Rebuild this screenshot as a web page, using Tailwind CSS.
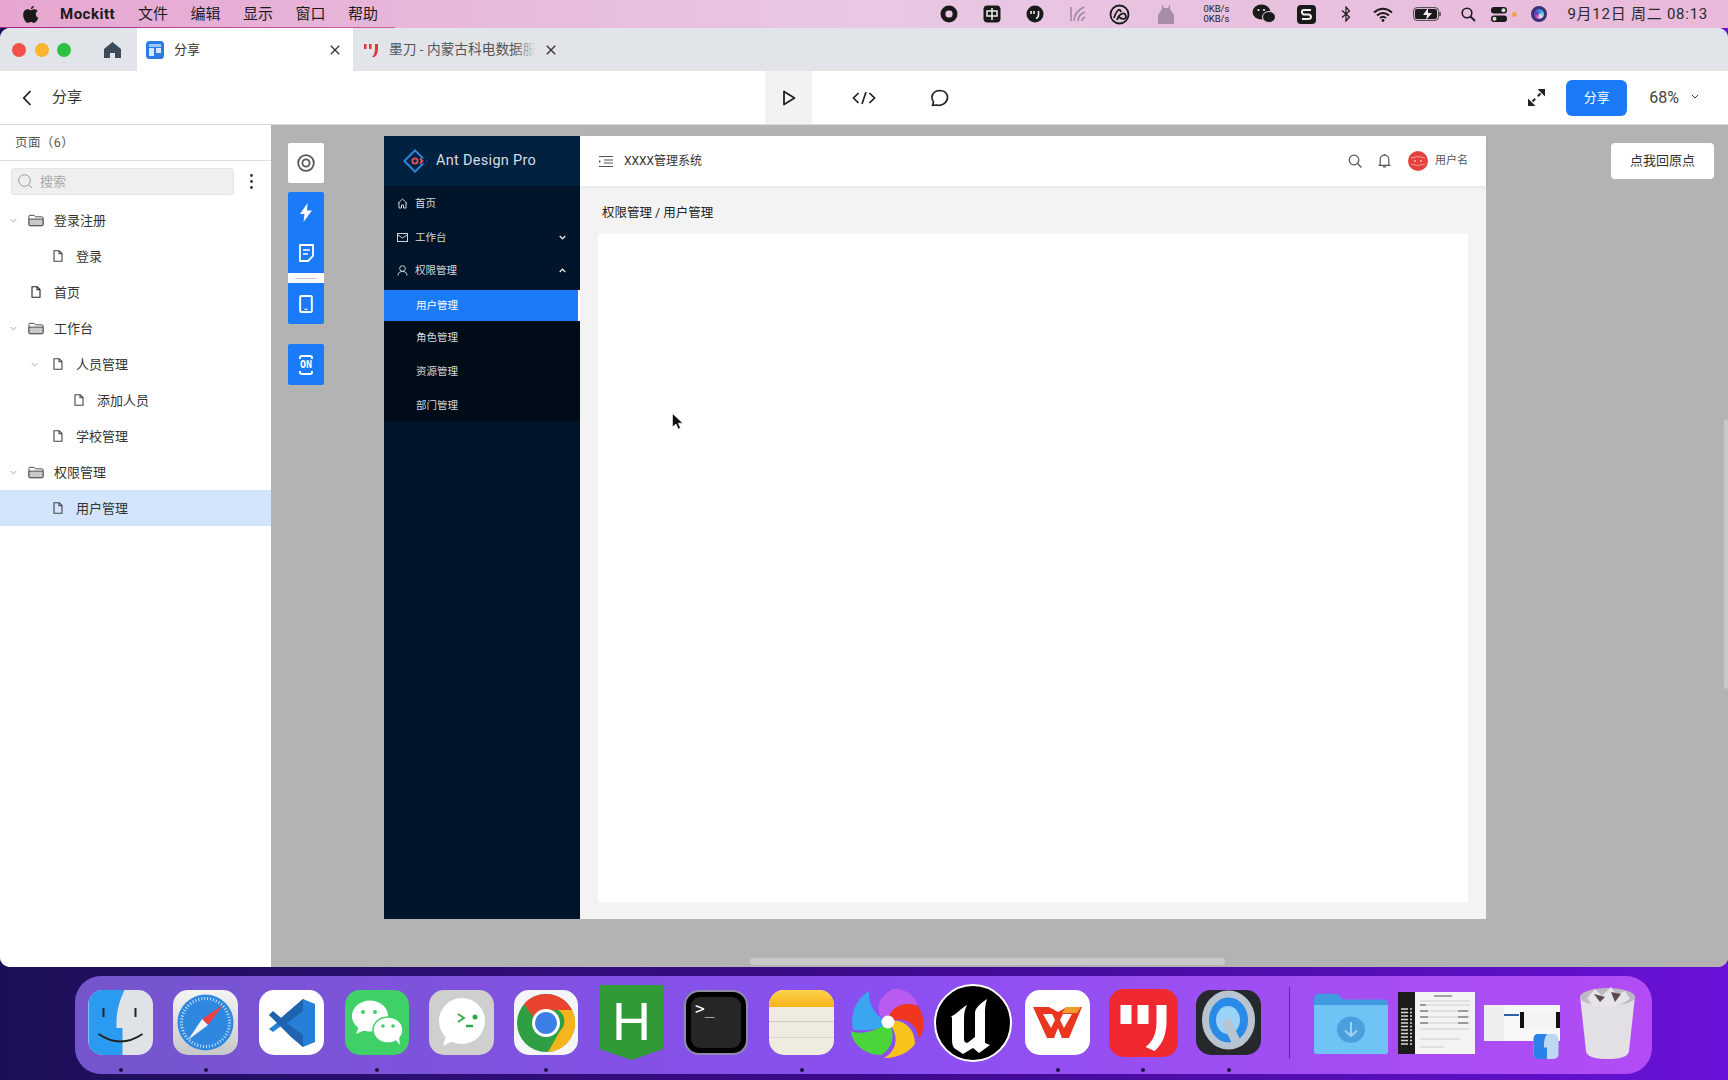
<!DOCTYPE html>
<html lang="zh-CN">
<head>
<meta charset="UTF-8" />
<title>分享</title>
<script src="https://cdn.jsdelivr.net/npm/@tailwindcss/browser@4"></script>
</head>
<body class="w-[1728px] h-[1080px] overflow-hidden relative bg-gradient-to-r from-[#1c0f58] via-[#3c0a8c] to-[#6a12d8] font-['Roboto','Noto_Sans_CJK_SC',sans-serif] text-[#333]">

<svg class="hidden">
  <symbol id="file" viewBox="0 0 10 12"><path d="M1 .7h5.200L9 3.500v7.800H1zM6 .9v2.800h2.900" fill="none" stroke="currentColor" stroke-width="1.100"/></symbol>
  <symbol id="folder" viewBox="0 0 17 13"><path d="M1 11V2q0-1 1-1h4.500l1.500 1.600h6.800q1.200 0 1.200 1.200V11q0 1-1 1H2q-1 0-1-1z" fill="#fff" stroke="#444" stroke-width="1"/><path d="M1 5h15v6q0 1-1 1H2q-1 0-1-1z" fill="#c9c9c9" stroke="#444" stroke-width="1"/></symbol>
  <symbol id="chev" viewBox="0 0 8 5"><path d="M.8.8 4 4 7.200.8" fill="none" stroke="#999" stroke-width="1"/></symbol>
</svg>

<!-- mac menu bar -->
<div class="h-[28px] flex items-center justify-between bg-gradient-to-r from-[#e6a6d0] via-[#e8c8e4] to-[#e9b9da] text-[15px] text-[#1c1c1c] relative">
  <div class="flex items-center">
    <svg class="ml-[22px] w-[17px] h-[19px]" viewBox="0 0 17 20"><path d="M12 1c.1 1.600-1.300 3.400-3.200 3.300C8.600 2.700 10.200 1.100 12 1zM8.700 5.400c.9 0 2-1 3.700-1 1.200 0 2.700.6 3.600 1.900-2.900 1.800-2.400 5.800.7 7.100-.9 2.400-2.700 5.400-4.500 5.400-1.200 0-1.700-.8-3.200-.8s-2 .8-3.200.8C3.500 18.800.8 14.200.8 10.400c0-3.600 2.300-5.800 4.600-5.800 1.400 0 2.500.8 3.300.8z" fill="#1a1a1a"/></svg>
    <span class="ml-[21px] font-bold text-[#1a1a1a] w-[78px] tracking-[.5px]">Mockitt</span>
    <div class="flex gap-[22.500px]"><span>文件</span><span>编辑</span><span>显示</span><span>窗口</span><span>帮助</span></div>
  </div>
  <div class="flex items-center pr-[20px]">
    <svg class="w-[18px] h-[18px]" viewBox="0 0 18 18"><circle cx="9" cy="9" r="8.500" fill="#1a1a1a"/><rect x="5.500" y="5.500" width="7" height="7" rx="3" fill="#e8c8e4"/></svg>
    <svg class="ml-[25px] w-[18px] h-[18px]" viewBox="0 0 18 18"><rect x=".5" y=".5" width="17" height="17" rx="4" fill="#1a1a1a"/><path d="M4 6h10v5H4zM9 3v12" fill="none" stroke="#eee" stroke-width="1.500"/></svg>
    <svg class="ml-[25px] w-[18px] h-[18px]" viewBox="0 0 18 18"><circle cx="9" cy="9" r="8.500" fill="#1a1a1a"/><path d="M5 6v3M8 6v3M12.500 6v4q0 2.500-2.500 3.500" fill="none" stroke="#eee" stroke-width="1.600"/></svg>
    <svg class="ml-[25px] w-[18px] h-[18px]" viewBox="0 0 18 18"><path d="M2 2v14M5 16C5 9 9 5 15 2M9 16c0-4 2-7 7-9M13 16c0-2 1-3 3-4" fill="none" stroke="#9a8a9a" stroke-width="1.500"/></svg>
    <svg class="ml-[22px] w-[21px] h-[21px]" viewBox="0 0 21 21"><circle cx="10.500" cy="10.500" r="9" fill="none" stroke="#1a1a1a" stroke-width="1.800"/><path d="M5 14c3-9 6-10 7-6M8 16c2-7 9-9 9-3 0 2-4 3-7 0" fill="none" stroke="#1a1a1a" stroke-width="1.800"/></svg>
    <svg class="ml-[27px] w-[18px] h-[22px]" viewBox="0 0 18 22"><path d="M5 1v5L1 12v9h16v-9l-4-6V1l-2 4H7z" fill="#a68da6"/></svg>
    <div class="ml-[25px] w-[32px] text-[9.500px] leading-[10px] text-center text-[#222]">0KB/s<br>0KB/s</div>
    <svg class="ml-[20px] w-[24px] h-[20px]" viewBox="0 0 24 20"><ellipse cx="9.500" cy="8" rx="9" ry="7.500" fill="#1a1a1a"/><ellipse cx="17" cy="13" rx="6.500" ry="5.500" fill="#1a1a1a" stroke="#e8c8e4"/><circle cx="6.500" cy="6" r="1.100" fill="#eee"/><circle cx="12" cy="6" r="1.100" fill="#eee"/></svg>
    <svg class="ml-[21px] w-[19px] h-[19px]" viewBox="0 0 19 19"><rect width="19" height="19" rx="4" fill="#1a1a1a"/><path d="M14 5H7Q4.500 5 5 7.500T8 9.500h3.500Q14 10 14 12t-3 2H5" fill="none" stroke="#eee" stroke-width="2"/></svg>
    <svg class="ml-[25px] w-[10px] h-[16px]" viewBox="0 0 10 16"><path d="M1 4.500 8.500 11 5 15V1l3.500 4L1 11.500" fill="none" stroke="#1a1a1a" stroke-width="1.200"/></svg>
    <svg class="ml-[22px] w-[20px] h-[15px]" viewBox="0 0 20 15"><path d="M1 5.500q9-7.500 18 0M4 8.500q6-5 12 0M7 11q3-2.500 6 0" fill="none" stroke="#1a1a1a" stroke-width="2"/><circle cx="10" cy="13.500" r="1.400" fill="#1a1a1a"/></svg>
    <svg class="ml-[20px] w-[29px] h-[14px]" viewBox="0 0 29 14"><rect x=".6" y=".6" width="25" height="12.800" rx="3.500" fill="none" stroke="#444"/><rect x="2" y="2" width="22" height="10" rx="2" fill="#1a1a1a"/><path d="M27 5v4" stroke="#444" stroke-width="1.500"/><path d="M15 1 10 8h4l-1 5 6-7h-4z" fill="#eee"/></svg>
    <svg class="ml-[19px] w-[15px] h-[15px]" viewBox="0 0 15 15"><circle cx="6" cy="6" r="4.800" fill="none" stroke="#1a1a1a" stroke-width="1.600"/><path d="m9.500 9.500 4.500 4.500" stroke="#1a1a1a" stroke-width="1.800"/></svg>
    <svg class="ml-[15px] w-[16px] h-[15px]" viewBox="0 0 16 15"><rect y="0" width="16" height="6.500" rx="3" fill="#1a1a1a"/><rect y="8.500" width="16" height="6.500" rx="3" fill="#1a1a1a"/><circle cx="12.500" cy="3.200" r="2" fill="#ddd"/><circle cx="3.500" cy="11.700" r="2" fill="#ddd"/></svg>
    <span class="ml-[5px] w-[5px] h-[5px] rounded-full bg-[#f0a050]"></span>
    <span class="ml-[14px] w-[16px] h-[16px] rounded-full bg-[conic-gradient(#3f7fe0,#46c6d8,#e9e9f0,#c84fb8,#5b3fb8,#3f7fe0)] border-[3px] border-[#3a2f78]"></span>
    <span class="ml-[20px] text-[15px] tracking-[.75px] text-[#2a2a2a]">9月12日 周二 08:13</span>
  </div>
  <div class="absolute left-0 bottom-0 w-[395px] h-px bg-gradient-to-r from-[#a0208c] to-[#d060a8]"></div>
</div>

<!-- window -->
<div class="h-[939px] flex flex-col rounded-[10px] overflow-hidden bg-white relative">
  <!-- tabs -->
  <div class="h-[43px] flex items-stretch bg-[#e1e4e9] shrink-0">
    <div class="flex items-center w-[137px] shrink-0">
      <span class="ml-[12px] w-[14px] h-[14px] rounded-full bg-[#f4504a]"></span>
      <span class="ml-[9px] w-[14px] h-[14px] rounded-full bg-[#f8b52f]"></span>
      <span class="ml-[8px] w-[14px] h-[14px] rounded-full bg-[#2cc140]"></span>
      <svg class="ml-[33px] w-[17px] h-[16px]" viewBox="0 0 17 16"><path d="M8.500 0 17 7v9h-6v-5H6v5H0V7z" fill="#3d4a57"/></svg>
    </div>
    <div class="w-[216px] bg-white flex items-center text-[13px] text-[#333]">
      <svg class="ml-[9px] w-[18px] h-[18px]" viewBox="0 0 18 18"><rect width="18" height="18" rx="3.500" fill="#2c7ce5"/><path d="M3 3h12v3H3z" fill="#9cc4f5"/><path d="M3 7h5v8H3zM10 7h5v5h-5z" fill="#d8e8fb"/></svg>
      <span class="ml-[10px]">分享</span>
      <svg class="ml-auto mr-[13px] w-[10px] h-[10px]" viewBox="0 0 10 10"><path d="m.8.8 8.400 8.400M9.200.8.800 9.200" stroke="#333" stroke-width="1.300"/></svg>
    </div>
    <div class="flex items-center text-[13.700px] text-[#555]">
      <svg class="ml-[10px] w-[16px] h-[14px]" viewBox="0 0 16 14"><path d="M1 1h2.500v5H1zM6 1h2.500v5H6zM12 1h3v5q0 5-3.500 8H9q3-3 3-8z" fill="#e6323a"/></svg>
      <div class="ml-[10px] relative whitespace-nowrap">墨刀 - 内蒙古科电数据服<div class="absolute right-0 top-0 w-[22px] h-full bg-gradient-to-r from-transparent to-[#e1e4e9]"></div></div>
      <svg class="ml-[10px] w-[10px] h-[10px]" viewBox="0 0 10 10"><path d="m.8.8 8.400 8.400M9.200.8.800 9.200" stroke="#333" stroke-width="1.300"/></svg>
    </div>
  </div>
  <!-- toolbar -->
  <div class="h-[54px] shrink-0 flex items-center bg-white border-b border-[#d9d9d9]">
    <svg class="ml-[22px] w-[10px] h-[16px]" viewBox="0 0 10 16"><path d="M8.500 1 1.800 8l6.700 7" fill="none" stroke="#222" stroke-width="1.800"/></svg>
    <span class="ml-[20px] w-[31px] text-[15px] text-[#333]">分享</span>
    <div class="ml-[682px] w-[47px] self-stretch bg-[#f2f2f2] flex items-center justify-center">
      <svg class="w-[14px] h-[16px]" viewBox="0 0 14 16"><path d="M2 1.500v13L12.500 8z" fill="none" stroke="#222" stroke-width="1.800" stroke-linejoin="round"/></svg>
    </div>
    <svg class="ml-[40px] w-[24px] h-[14px]" viewBox="0 0 24 14"><path d="M6.500 2 1.500 7l5 5M17.500 2l5 5-5 5M14 1l-4 12" fill="none" stroke="#222" stroke-width="1.700"/></svg>
    <svg class="ml-[54px] w-[19px] h-[18px]" viewBox="0 0 19 18"><path d="M2.500 16.500 3.500 13Q1.500 10.500 2 7.500 3 2 9.500 1.500 16 1.500 17.500 7q.5 5-4 8-3.500 2-7 1z" fill="none" stroke="#222" stroke-width="1.700" stroke-linejoin="round"/></svg>
    <svg class="ml-auto w-[17px] h-[17px]" viewBox="0 0 17 17"><path d="M17 0v7.500L9.500 0zM0 17V9.500L7.500 17z" fill="#222"/><path d="M12.500 4.500 9.800 7.200M4.500 12.500l2.700-2.700" stroke="#222" stroke-width="2"/></svg>
    <button class="ml-[21px] w-[61px] h-[36px] rounded-[6px] bg-[#1a7af8] text-white text-[13px]">分享</button>
    <span class="ml-[22px] text-[16px] text-[#444]">68%</span>
    <svg class="ml-[12px] mb-[3px] mr-[29px] w-[8px] h-[5px]" viewBox="0 0 8 5"><path d="M.8.8 4 4 7.200.8" fill="none" stroke="#333" stroke-width="1"/></svg>
  </div>
  <div class="flex-1 flex min-h-0">
    <!-- page tree -->
    <aside class="w-[271px] shrink-0 bg-white">
      <div class="h-[36px] border-b border-[#e0e0e0] pl-[15px] pt-[2px] flex items-center text-[12.500px] text-[#555] tracking-[.4px]">页面（6）</div>
      <div class="h-[41px] flex items-center">
        <div class="ml-[11px] w-[223px] h-[27px] bg-[#efefef] border border-[#e4e4e4] rounded-[3px] flex items-center text-[13px] text-[#aaa]">
          <svg class="ml-[6px] w-[15px] h-[15px]" viewBox="0 0 15 15"><circle cx="6.500" cy="6.500" r="5.800" fill="none" stroke="#999"/><path d="m10.800 10.800 3.500 3.500" stroke="#999"/></svg>
          <span class="ml-[7px]">搜索</span>
        </div>
        <svg class="ml-[16px] w-[3px] h-[15px]" viewBox="0 0 3 15"><circle cx="1.500" cy="1.500" r="1.400" fill="#333"/><circle cx="1.500" cy="7.500" r="1.400" fill="#333"/><circle cx="1.500" cy="13.500" r="1.400" fill="#333"/></svg>
      </div>
      <div class="text-[13px] text-[#333]">
        <div class="h-[36px] flex items-center pl-[10px]"><svg class="w-[7px] h-[5px] text-[#999]"><use href="#chev"/></svg><svg class="ml-[11px] w-[16px] h-[13px]"><use href="#folder"/></svg><span class="ml-[10px] mt-[2px]">登录注册</span></div>
        <div class="h-[36px] flex items-center pl-[53px]"><svg class="w-[10px] h-[12px] text-[#444]"><use href="#file"/></svg><span class="ml-[13px] mt-[2px]">登录</span></div>
        <div class="h-[36px] flex items-center pl-[31px]"><svg class="w-[10px] h-[12px] text-[#222]"><use href="#file"/></svg><span class="ml-[13px] mt-[2px]">首页</span></div>
        <div class="h-[36px] flex items-center pl-[10px]"><svg class="w-[7px] h-[5px]"><use href="#chev"/></svg><svg class="ml-[11px] w-[16px] h-[13px]"><use href="#folder"/></svg><span class="ml-[10px] mt-[2px]">工作台</span></div>
        <div class="h-[36px] flex items-center pl-[31px]"><svg class="w-[7px] h-[5px]"><use href="#chev"/></svg><svg class="ml-[15px] w-[10px] h-[12px] text-[#444]"><use href="#file"/></svg><span class="ml-[13px] mt-[2px]">人员管理</span></div>
        <div class="h-[36px] flex items-center pl-[74px]"><svg class="w-[10px] h-[12px] text-[#444]"><use href="#file"/></svg><span class="ml-[13px] mt-[2px]">添加人员</span></div>
        <div class="h-[36px] flex items-center pl-[53px]"><svg class="w-[10px] h-[12px] text-[#444]"><use href="#file"/></svg><span class="ml-[13px] mt-[2px]">学校管理</span></div>
        <div class="h-[36px] flex items-center pl-[10px]"><svg class="w-[7px] h-[5px]"><use href="#chev"/></svg><svg class="ml-[11px] w-[16px] h-[13px]"><use href="#folder"/></svg><span class="ml-[10px] mt-[2px]">权限管理</span></div>
        <div class="h-[36px] flex items-center pl-[53px] bg-[#d3e5fd]"><svg class="w-[10px] h-[12px] text-[#444]"><use href="#file"/></svg><span class="ml-[13px] mt-[2px]">用户管理</span></div>
      </div>
    </aside>
    <!-- canvas -->
    <main class="flex-1 bg-[#b3b3b3] relative overflow-hidden">
      <div class="absolute left-[17px] top-[18px] w-[36px] flex flex-col">
        <div class="h-[40px] bg-white rounded-[2px] flex items-center justify-center">
          <svg class="w-[18px] h-[18px]" viewBox="0 0 18 18"><circle cx="9" cy="9" r="7.800" fill="none" stroke="#555" stroke-width="1.800"/><circle cx="9" cy="9" r="3.600" fill="none" stroke="#555" stroke-width="1.800"/></svg>
        </div>
        <div class="mt-[9px] h-[132px] bg-[#1a7af8] rounded-[2px] flex flex-col items-center">
          <svg class="mt-[11px] w-[12px] h-[19px]" viewBox="0 0 12 19"><path d="M7.500 0 0 11h4.500L3.500 19 12 7.500H7z" fill="#fff"/></svg>
          <svg class="mt-[22px] w-[15px] h-[18px]" viewBox="0 0 15 18"><path d="M1 1h13v11l-5 5H1z" fill="none" stroke="#fff" stroke-width="1.800"/><path d="M4 6h7M4 10h5" stroke="#fff" stroke-width="1.500"/></svg>
          <div class="mt-[11px] w-full h-[10px] bg-white flex items-center justify-center"><div class="w-[22px] h-px bg-[#ccc]"></div></div>
          <svg class="mt-[12px] w-[14px] h-[18px]" viewBox="0 0 13 17"><rect x="1" y="1" width="11" height="15" rx="1" fill="none" stroke="#fff" stroke-width="1.800"/><path d="M5 13.500h3" stroke="#fff"/></svg>
        </div>
        <div class="mt-[20px] h-[41px] bg-[#1a7af8] rounded-[2px] flex flex-col items-center justify-center text-white">
          <div class="w-[14px] h-[4px] border-t-2 border-x-2 border-white rounded-t-[3px]"></div>
          <span class="font-['DejaVu_Sans_Mono',monospace] font-bold text-[10px] leading-[12px]">ON</span>
          <div class="w-[14px] h-[4px] border-b-2 border-x-2 border-white rounded-b-[3px]"></div>
        </div>
      </div>

      <!-- artboard -->
      <div class="absolute left-[113px] top-[11px] w-[1102px] h-[783px] flex bg-[#f3f3f3]">
        <div class="w-[196px] shrink-0 bg-[#001529] text-[10.500px] text-[#d6dadd]">
          <div class="h-[50px] bg-[#002140] flex items-center pl-[19px]">
            <svg class="w-[24px] h-[24px]" viewBox="0 0 24 24"><rect x="4.500" y="4.500" width="15" height="15" transform="rotate(45 12 12)" fill="none" stroke="#2f86d6" stroke-width="2"/><path d="M19 12h4" stroke="#001f3c" stroke-width="5"/><circle cx="12" cy="12" r="2.600" fill="none" stroke="#e8505b" stroke-width="1.800"/><path d="m17 9.500 2.500 2.500-2.500 2.500" fill="none" stroke="#e8505b" stroke-width="1.800"/></svg>
            <span class="ml-[9px] text-[14.500px] font-normal text-[#d5dbe1] tracking-[.3px]">Ant Design Pro</span>
          </div>
          <div class="h-[35px] flex items-center pl-[13px]">
            <svg class="w-[11px] h-[11px]" viewBox="0 0 11 11"><path d="M.8 5.500 5.500 1l4.700 4.500M2 4.500V10h2.500V7h2v3H9V4.500" fill="none" stroke="#cfd4d8"/></svg>
            <span class="ml-[7px]">首页</span>
          </div>
          <div class="h-[33px] flex items-center pl-[13px]">
            <svg class="w-[11px] h-[9px]" viewBox="0 0 11 9"><rect x=".5" y=".5" width="10" height="8" fill="none" stroke="#cfd4d8"/><path d="m1 2 4.500 3L10 2" fill="none" stroke="#cfd4d8"/></svg>
            <span class="ml-[7px]">工作台</span>
            <svg class="ml-auto mr-[14px] w-[7px] h-[5px]" viewBox="0 0 8 5"><path d="M.8.8 4 4 7.200.8" fill="none" stroke="#e5e5e5" stroke-width="1.500"/></svg>
          </div>
          <div class="h-[33px] mb-[3px] flex items-center pl-[13px]">
            <svg class="w-[11px] h-[11px]" viewBox="0 0 11 11"><circle cx="5.500" cy="3.500" r="2.800" fill="none" stroke="#cfd4d8"/><path d="M1 10.500q0-4 4.500-4t4.500 4" fill="none" stroke="#cfd4d8"/></svg>
            <span class="ml-[7px]">权限管理</span>
            <svg class="ml-auto mr-[14px] w-[7px] h-[5px]" viewBox="0 0 8 5"><path d="M.8 4.200 4 1l3.200 3.200" fill="none" stroke="#e5e5e5" stroke-width="1.500"/></svg>
          </div>
          <div class="bg-[#000c17]">
            <div class="h-[31px] bg-[#1a7af8] border-r-[2px] border-white flex items-center pl-[32px] text-white">用户管理</div>
            <div class="h-[34px] flex items-center pl-[32px]">角色管理</div>
            <div class="h-[34px] flex items-center pl-[32px]">资源管理</div>
            <div class="h-[33px] flex items-center pl-[32px]">部门管理</div>
          </div>
        </div>
        <div class="flex-1 flex flex-col min-w-0">
          <div class="h-[50px] shrink-0 bg-white shadow-[0_1px_3px_rgba(0,0,0,.08)] flex items-center text-[#333]">
            <svg class="ml-[19px] w-[14px] h-[11px]" viewBox="0 0 14 11"><path d="M0 .5h14M5 4h9M5 7h9M0 10.500h14" stroke="#555"/><path d="M0 4v3l2-1.500z" fill="#555"/></svg>
            <span class="ml-[11px] text-[12px]">XXXX管理系统</span>
            <svg class="ml-auto w-[14px] h-[14px]" viewBox="0 0 14 14"><circle cx="6" cy="6" r="4.800" fill="none" stroke="#555" stroke-width="1.200"/><path d="m9.500 9.500 4 4" stroke="#555" stroke-width="1.300"/></svg>
            <svg class="ml-[16px] w-[13px] h-[16px]" viewBox="0 0 12 14"><path d="M2 10.500V5.500a4 4 0 0 1 8 0v5M.5 11h11M6 .5v1M4.500 12.500h3" fill="none" stroke="#555" stroke-width="1.100"/></svg>
            <svg class="ml-[17px] w-[20px] h-[20px]" viewBox="0 0 20 20"><circle cx="10" cy="10" r="10" fill="#e4423c"/><path d="M3 7q7-3 14 0M3 13q7 3 14 0" fill="none" stroke="#f5b5a5" stroke-width=".8"/><path d="M7 9v2M13 9v2" stroke="#fff"/></svg>
            <span class="ml-[7px] mr-[18px] text-[11px] text-[#555]">用户名</span>
          </div>
          <div class="h-[48px] shrink-0 flex items-center pl-[22px] pt-[6px] text-[12.500px] text-[#222]">权限管理 / 用户管理</div>
          <div class="mx-[18px] h-[668px] bg-white"></div>
        </div>
      </div>

      <button class="absolute left-[1340px] top-[18px] w-[103px] h-[36px] rounded-[4px] bg-white text-[13px] text-[#333]">点我回原点</button>
      <!-- pointer -->
      <svg class="absolute left-[401px] top-[288px] w-[11px] h-[17px]" viewBox="0 0 11 17"><path d="M.5.5V14l3.500-3 2.200 5 2.300-1-2.200-4.800h4.500z" fill="#111" stroke="#fff" stroke-width=".6"/></svg>
      <!-- scrollbars -->
      <div class="absolute left-[1453px] top-[294px] w-[4px] h-[270px] rounded-full bg-[#c8c8c8]"></div>
      <div class="absolute left-[479px] top-[833px] w-[475px] h-[7px] rounded-full bg-[#c9c9c9]"></div>
    </main>
  </div>
</div>

<!-- dock -->
<div class="absolute left-[75px] top-[976px] w-[1577px] h-[98px] rounded-[26px] bg-gradient-to-r from-[#7455cc] via-[#8a4ff0] to-[#b34cf5] flex items-center pl-[13px] pb-[5px]">
  <!-- finder -->
  <div class="w-[65px] h-[65px] rounded-[15px] overflow-hidden bg-[#dfe3e8] shrink-0">
    <svg class="w-full h-full" viewBox="0 0 64 65"><path d="M0 0h36q-9 18-8 38h6v27H0z" fill="#2a9bf0"/><path d="M15 18v9M47 18v9" stroke="#222" stroke-width="2"/><path d="M10 44q22 15 44 0" fill="none" stroke="#222" stroke-width="2"/></svg>
  </div>
  <!-- safari -->
  <div class="ml-[20px] w-[65px] h-[65px] rounded-[15px] bg-gradient-to-b from-[#f4f4f4] to-[#c8c8c8] flex items-center justify-center shrink-0">
    <svg class="w-[57px] h-[57px]" viewBox="0 0 57 57"><circle cx="28.500" cy="28.500" r="28" fill="#2f88e0"/><circle cx="28.500" cy="28.500" r="24" fill="none" stroke="#cfe3f8" stroke-width="3" stroke-dasharray="1 2"/><path d="m46 11-21 14 6 6z" fill="#ee4040"/><path d="m11 46 14-21 6 6z" fill="#f2f2f2"/></svg>
  </div>
  <!-- vscode -->
  <div class="ml-[21px] w-[65px] h-[65px] rounded-[15px] bg-white flex items-center justify-center shrink-0">
    <svg class="w-[48px] h-[50px]" viewBox="0 0 48 50"><path d="M35 1 47 6v38L35 49 13 28l-8 6-4-3 9-7-9-7 4-3 8 6z" fill="#2680d8"/><path d="M35 1 13 20 5 13 1 17l22 22 12 10V37L19 25 35 13z" fill="#1f62b0"/></svg>
  </div>
  <!-- wechat -->
  <div class="ml-[21px] w-[64px] h-[65px] rounded-[15px] bg-[#3fd068] shrink-0">
    <svg class="w-full h-full" viewBox="0 0 64 65"><ellipse cx="25" cy="26" rx="18" ry="15.500" fill="#fff"/><path d="m14 36-3 8 9-4z" fill="#fff"/><ellipse cx="43" cy="40" rx="15" ry="13" fill="#fff" stroke="#3fd068" stroke-width="1.500"/><path d="m50 49 5 6-1-9z" fill="#fff"/><circle cx="18" cy="22" r="2" fill="#3fd068"/><circle cx="30" cy="22" r="2" fill="#3fd068"/><circle cx="38" cy="36" r="1.800" fill="#3fd068"/><circle cx="48" cy="36" r="1.800" fill="#3fd068"/></svg>
  </div>
  <!-- grey chat -->
  <div class="ml-[20px] w-[65px] h-[65px] rounded-[15px] bg-[#cfcfcf] shrink-0 flex">
    <svg class="w-full h-full" viewBox="0 0 65 65"><circle cx="33" cy="31" r="23" fill="#fff"/><path d="m17 46-3 10 12-6z" fill="#fff"/><path d="m29 24 6 4-6 4" fill="none" stroke="#2ba84a" stroke-width="1.800"/><circle cx="46" cy="27" r="2.500" fill="#2ba84a"/><path d="M37 36h7" stroke="#2ba84a" stroke-width="2.500"/></svg>
  </div>
  <!-- chrome -->
  <div class="ml-[20px] w-[64px] h-[65px] rounded-[15px] bg-[#f4f5f8] flex items-center justify-center shrink-0">
    <svg class="w-[60px] h-[60px]" viewBox="0 0 60 60"><circle cx="30" cy="30" r="29" fill="#2f9e44"/><path d="M30 1a29 29 0 0 1 26 16H30a13 13 0 0 0-12 8L8 11A29 29 0 0 1 30 1z" fill="#e8442f"/><path d="M56 17a29 29 0 0 1-24 42l12-21a13 13 0 0 0-2-21z" fill="#f7b51c"/><circle cx="30" cy="30" r="14" fill="#fff"/><circle cx="30" cy="30" r="11" fill="#3c7fe6"/></svg>
  </div>
  <!-- hbuilder -->
  <div class="ml-[21px] w-[65px] h-[75px] bg-[#2f9a36] [clip-path:polygon(0_0,100%_0,100%_85%,50%_100%,0_85%)] flex items-start justify-center shrink-0 text-white">
    <span class="font-['Liberation_Sans',sans-serif] text-[54px] leading-[72px] font-normal">H</span>
  </div>
  <!-- terminal -->
  <div class="ml-[20px] w-[64px] h-[65px] rounded-[15px] bg-black border-2 border-[#8d8da8] p-[5px] shrink-0">
    <div class="w-full h-full rounded-[9px] bg-[#262626] text-white font-['DejaVu_Sans_Mono',monospace] text-[16px] leading-[18px] pl-[4px] pt-[3px]">&gt;_</div>
  </div>
  <!-- notes -->
  <div class="ml-[21px] w-[65px] h-[65px] rounded-[15px] overflow-hidden bg-[#eeebdf] shrink-0 flex flex-col">
    <div class="h-[17px] bg-gradient-to-b from-[#fdd24a] to-[#f6b40e]"></div>
    <div class="h-[15px] border-b border-[#cfcbbd]"></div>
    <div class="h-[16px] border-b border-[#d9d5c8]"></div>
  </div>
  <!-- colorful spiral -->
  <svg class="ml-[17px] w-[74px] h-[73px] shrink-0" viewBox="0 0 74 73"><path d="M37 36C23 30 24 12 42 3c12-1 22 6 25 17-12-2-24 3-30 16z" fill="#b95af0"/><path d="M37 36c0-13 14-22 30-16 7 11 7 24 1 33-2-16-15-24-31-17z" fill="#f0361f"/><path d="M37 36c12-5 27 4 27 22-6 9-21 15-31 14 12-6 17-22 4-36z" fill="#f9c41a"/><path d="M37 36c9 11 4 28-7 33C14 69 1 58 0 45c11 5 27-1 37-9z" fill="#48d63b"/><path d="M37 36C27 46 12 44 2 44-1 30 4 13 18 5c-1 13 6 25 19 31z" fill="#3aa6f2"/><circle cx="37" cy="36" r="6.500" fill="#fff"/></svg>
  <!-- unreal -->
  <div class="ml-[9px] w-[78px] h-[78px] rounded-full bg-black border-2 border-white shrink-0">
    <svg class="w-full h-full" viewBox="0 0 74 74"><path d="M14 31c7-3 10-8 17-12-3 6-3 10-3 18v16c0 4 3 5 6 2l5-4V27c0-5 5-9 12-14-2 6-2 10-2 16v28l5 2-11 8-6-5-10 6-9-6c-2-3-2-6-2-10V33c0-3-1-3-2-2z" fill="#fff"/></svg>
  </div>
  <!-- wps -->
  <div class="ml-[13px] w-[65px] h-[65px] rounded-[15px] bg-white flex items-center justify-center shrink-0">
    <svg class="w-[49px] h-[31px]" viewBox="0 0 49 31"><path d="M0 0h16l9 5 9-5h15L36 31h-7l-4-10-4 10h-7zM10 7l8 14 4-8-3-6zM39 7h-9l-3 6 4 8z" fill="#e8361f" fill-rule="evenodd"/><path d="M33 0h15l-4 6H29z" fill="#f59a2f"/></svg>
  </div>
  <!-- mockingbot -->
  <div class="ml-[19px] w-[69px] h-[68px] rounded-[15px] bg-[#f0282f] shrink-0">
    <svg class="w-full h-full" viewBox="0 0 68 68"><path d="M11 16h11v19H11zM28 16h11v19H28zM47 16h10v16q0 20-12 30l-9-4c8-6 11-14 11-26z" fill="#fff"/></svg>
  </div>
  <!-- quicktime -->
  <div class="ml-[18px] w-[65px] h-[65px] rounded-[15px] bg-[#26282c] shrink-0">
    <svg class="w-full h-full" viewBox="0 0 65 65"><ellipse cx="32.500" cy="30" rx="23" ry="26" fill="#2a8ae8" stroke="#b8c4d0" stroke-width="7"/><ellipse cx="32" cy="30" rx="12" ry="14" fill="#9bd2f7"/><path d="m30 30 12 26" stroke="#b8c4d0" stroke-width="9"/></svg>
  </div>
  <div class="ml-[28px] w-px h-[72px] bg-[#5b2a90] shrink-0"></div>
  <!-- downloads -->
  <div class="ml-[23px] w-[76px] shrink-0">
    <svg class="w-[76px] h-[64px] block" viewBox="0 0 76 68" preserveAspectRatio="none"><path d="M1 8q0-5 5-5h18l6 6h40q5 0 5 5v50q0 3-4 3H5q-4 0-4-3z" fill="#3f9be0"/><path d="M1 15h74v49q0 3-4 3H5q-4 0-4-3z" fill="#6fc3f5"/><circle cx="38" cy="41" r="14" fill="#4a9fdc"/><path d="M38 33v15m-6-6 6 6 6-6" fill="none" stroke="#9dd2f6" stroke-width="2"/></svg>
  </div>
  <!-- window thumbnails -->
  <svg class="ml-[9px] w-[77px] h-[62px] shrink-0" viewBox="0 0 77 62"><rect width="77" height="62" fill="#f3f3f3"/><rect width="17" height="62" fill="#1c1c1c"/><path d="M3 17h11M3 20.500h11M3 24h11M3 27.500h11M3 31h11M3 34.500h11M3 38h11M3 41.500h11M3 45h11M3 48.500h11M3 52h11" stroke="#d8d8d8" stroke-width="1.500" stroke-dasharray="7 2"/><path d="M22 9h50M22 13h50M22 19h50M22 25h50M22 31h50M22 37h50M22 47h40M22 55h24" stroke="#c4c4c4" stroke-width=".8"/><path d="M22 13h6M22 19h8M22 25h8M22 31h8M60 19h10M60 25h10M60 31h10M36 4h18" stroke="#555" stroke-width="1.100"/></svg>
  <div class="ml-[9px] w-[76px] h-[36px] bg-[#f7f7f7] relative flex shrink-0">
    <div class="w-[20px] bg-[#eee]"></div>
    <div class="absolute left-[20px] top-[9px] w-[15px] h-[2px] bg-[#2f60a8]"></div>
    <div class="absolute left-[36px] top-[7px] w-[40px] h-[16px] bg-[#111] px-[4px]"><div class="w-full h-full bg-[#f4f4f4]"></div></div>
    <svg class="absolute left-[49px] top-[29px] w-[26px] h-[25px]" viewBox="0 0 26 26"><rect width="26" height="26" rx="5" fill="#bcd8f2"/><path d="M0 5q0-5 5-5h9q-4 6-3 14h3v12H5q-5 0-5-5z" fill="#2a82e8"/></svg>
  </div>
  <!-- trash -->
  <svg class="ml-[19px] w-[57px] h-[74px] shrink-0" viewBox="0 0 57 74"><path d="M1 10h55l-6 55q-1 8-21.500 8T7 65z" fill="#e2e0e5"/><ellipse cx="28.500" cy="11" rx="27.500" ry="9" fill="#bdb9c0"/><path d="M8 12 16 3l7 7 9-9 6 8 8-4 5 8-12 7H14z" fill="#e6e4e8"/><path d="M15 8l6 8 5-5zM32 6l4 10 6-8z" fill="#5a4a4c"/></svg>
</div>

<!-- dock running dots -->
<span class="absolute left-[119px] top-[1068px] w-[4px] h-[4px] rounded-full bg-[#1b1040]"></span>
<span class="absolute left-[204px] top-[1068px] w-[4px] h-[4px] rounded-full bg-[#1b1040]"></span>
<span class="absolute left-[375px] top-[1068px] w-[4px] h-[4px] rounded-full bg-[#1b1040]"></span>
<span class="absolute left-[544px] top-[1068px] w-[4px] h-[4px] rounded-full bg-[#1b1040]"></span>
<span class="absolute left-[800px] top-[1068px] w-[4px] h-[4px] rounded-full bg-[#1b1040]"></span>
<span class="absolute left-[1056px] top-[1068px] w-[4px] h-[4px] rounded-full bg-[#1b1040]"></span>
<span class="absolute left-[1141px] top-[1068px] w-[4px] h-[4px] rounded-full bg-[#1b1040]"></span>
<span class="absolute left-[1227px] top-[1068px] w-[4px] h-[4px] rounded-full bg-[#1b1040]"></span>
</body>
</html>
